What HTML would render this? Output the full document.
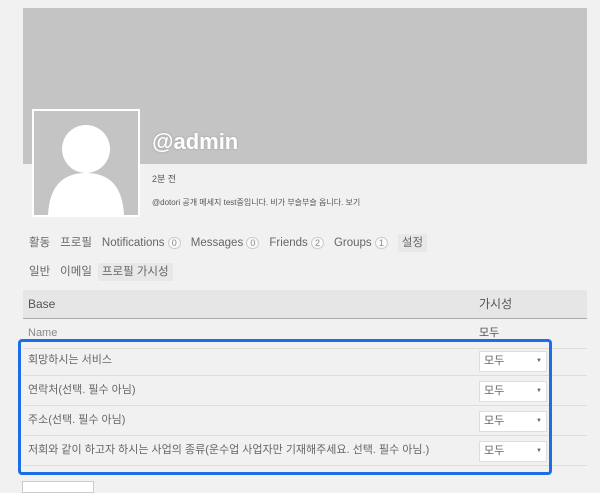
<!DOCTYPE html><html><head><meta charset="utf-8"><style>
body{margin:0;width:600px;height:485px;background:#f1f1f1;font-family:"Liberation Sans","Noto Sans CJK KR",sans-serif;color:#555;position:relative;overflow:hidden}
.a{position:absolute}
.cover{left:23px;top:8px;width:564px;height:156px;background:#c4c4c4}
.av{left:32px;top:109px;width:104px;height:104px;border:2px solid #fff;background:#c4c4c4;overflow:hidden}
.nav span{margin-right:10px;font-size:11.5px;color:#666}
.b{display:inline-block;border:1px solid #ccc;border-radius:7px;font-size:9px;padding:0 3px;color:#888;background:#fafafa;font-style:normal}
.row{left:23px;width:564px;height:30px;border-bottom:1px solid #ddd;font-size:11px;line-height:30px;text-indent:5px;color:#666}
.sel{position:absolute;left:456px;top:6px;width:66px;height:19px;background:#fff;border:1px solid #ddd;font-size:11px;line-height:19px;text-indent:4px}
.sel:after{content:"▼";position:absolute;right:4px;top:0;font-size:6px;text-indent:0}
</style></head><body>
<div class="a cover"></div>
<div class="a av"><svg width="104" height="104"><circle cx="52" cy="38" r="24" fill="#fff"/><path d="M14 104 Q16 62 52 62 Q88 62 90 104Z" fill="#fff"/></svg></div>
<div class="a" style="left:152px;top:129px;font-size:22px;font-weight:bold;color:#fff;text-shadow:0 0 2px #999">@admin</div>
<div class="a" style="left:152px;top:172px;font-size:9px">2분 전</div>
<div class="a" style="left:152px;top:197px;font-size:8px">@dotori 공개 메세지 test중입니다. 비가 부슬부슬 옵니다. 보기</div>
<div class="a nav" style="left:29px;top:233px"><span>활동</span><span>프로필</span><span>Notifications <i class="b">0</i></span><span>Messages <i class="b">0</i></span><span>Friends <i class="b">2</i></span><span>Groups <i class="b">1</i></span><span style="background:#e8e8e8;padding:3px 4px">설정</span></div>
<div class="a nav" style="left:29px;top:262px"><span>일반</span><span>이메일</span><span style="background:#e8e8e8;padding:3px 4px;margin-left:-4px">프로필 가시성</span></div>
<div class="a" style="left:23px;top:290px;width:564px;height:28px;background:#e6e6e6;border-bottom:1px solid #aaa;font-size:12px;line-height:28px"><span style="margin-left:5px">Base</span><span style="position:absolute;left:456px">가시성</span></div>
<div class="a row" style="top:318px;color:#888">Name<span style="position:absolute;left:456px;text-indent:0;color:#555">모두</span></div>
<div class="a row" style="top:345px">회망하시는 서비스<div class="sel">모두</div></div>
<div class="a row" style="top:375px">연락처(선택. 필수 아님)<div class="sel">모두</div></div>
<div class="a row" style="top:405px">주소(선택. 필수 아님)<div class="sel">모두</div></div>
<div class="a row" style="top:435px">저회와 같이 하고자 하시는 사업의 종류(운수업 사업자만 기재해주세요. 선택. 필수 아님.)<div class="sel">모두</div></div>
<div class="a" style="left:18px;top:339px;width:528px;height:130px;border:3px solid #1a6fe6;border-radius:4px"></div>
<div class="a" style="left:22px;top:481px;width:70px;height:10px;border:1px solid #ccc;background:#fff"></div>
</body></html>
